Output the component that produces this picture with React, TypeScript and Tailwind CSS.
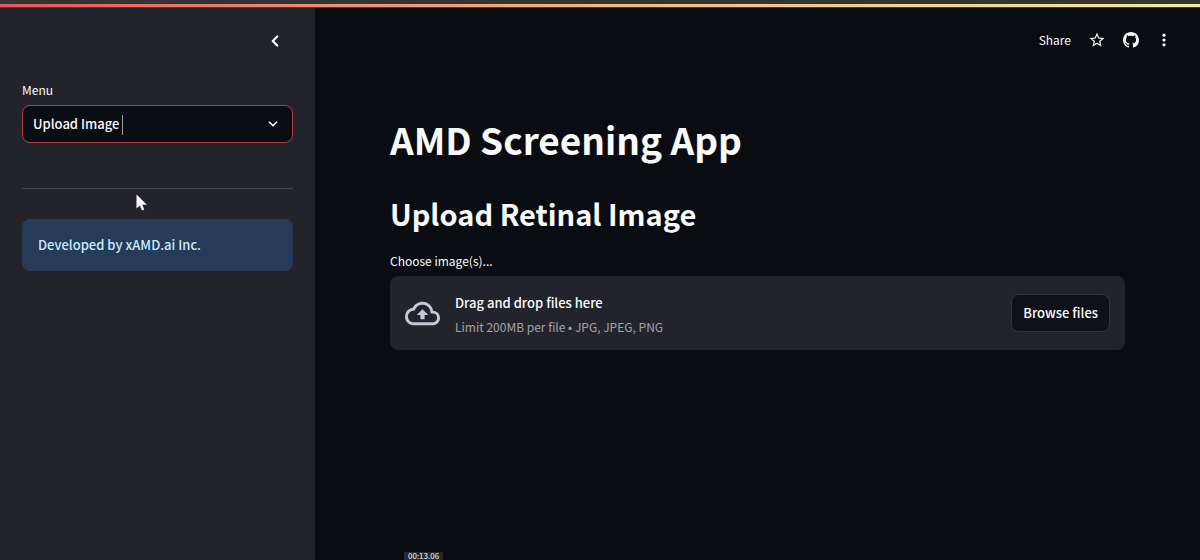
import { useState } from 'react';

import { ChevronDown, ChevronLeft } from 'lucide-react';
import { MdOutlineStarBorder } from 'react-icons/md';

const GithubIcon = () => (
  <svg width="16" height="16" viewBox="0 0 16 16" fill="currentColor" aria-hidden="true">
    <path d="M8 0C3.58 0 0 3.58 0 8c0 3.54 2.29 6.53 5.47 7.59.4.07.55-.17.55-.38 0-.19-.01-.82-.01-1.49-2.01.37-2.53-.49-2.69-.94-.09-.23-.48-.94-.82-1.13-.28-.15-.68-.52-.01-.53.63-.01 1.08.58 1.23.82.72 1.21 1.87.87 2.33.66.07-.52.28-.87.51-1.07-1.78-.2-3.64-.89-3.64-3.95 0-.87.31-1.59.82-2.15-.08-.2-.36-1.02.08-2.12 0 0 .67-.21 2.2.82.64-.18 1.32-.27 2-.27s1.36.09 2 .27c1.53-1.04 2.2-.82 2.2-.82.44 1.1.16 1.92.08 2.12.51.56.82 1.27.82 2.15 0 3.07-1.87 3.75-3.65 3.95.29.25.54.73.54 1.48 0 1.07-.01 1.93-.01 2.2 0 .21.15.46.55.38A8.01 8.01 0 0 0 16 8c0-4.42-3.58-8-8-8z" />
  </svg>
);

const MoreIcon = () => (
  <svg width="16" height="16" viewBox="0 0 16 16" fill="currentColor" aria-hidden="true">
    <circle cx="8" cy="3.2" r="1.6" />
    <circle cx="8" cy="8" r="1.6" />
    <circle cx="8" cy="12.8" r="1.6" />
  </svg>
);

const CloudUploadIcon = () => (
  <svg width="35" height="35" viewBox="0 0 24 24" fill="currentColor" aria-hidden="true">
    <path d="M19.35 10.04A7.49 7.49 0 0 0 12 4C9.11 4 6.6 5.64 5.35 8.04A5.994 5.994 0 0 0 0 14c0 3.31 2.69 6 6 6h13c2.76 0 5-2.24 5-5 0-2.64-2.05-4.78-4.65-4.96zM19 18H6c-2.21 0-4-1.79-4-4 0-2.05 1.53-3.76 3.56-3.97l1.07-.11.5-.95A5.469 5.469 0 0 1 12 6c2.62 0 4.88 1.86 5.39 4.43l.3 1.5 1.53.11A2.98 2.98 0 0 1 22 15c0 1.65-1.35 3-3 3zM8 13h2.55v3h2.9v-3H16l-4-4z" />
  </svg>
);

const Sidebar = () => {
  const [page, setPage] = useState('Upload Image');

  return (
    <aside className="w-[315px] shrink-0 bg-[#23242b] px-[22px]">
      <div className="flex justify-end pt-6">
        <button type="button" aria-label="Close sidebar" className="mr-[9px] p-0">
          <ChevronLeft size={18} strokeWidth={3} />
        </button>
      </div>

      <label htmlFor="menu" className="mt-[30px] block text-xs leading-5">
        Menu
      </label>
      <div className="relative mt-[5px]">
        <select
          id="menu"
          value={page}
          onChange={(e) => setPage(e.target.value)}
          className="h-[38px] w-full appearance-none rounded-lg border border-[#b13a43] bg-[#0a0d12] px-[10px] text-[13px] font-medium outline-none"
        >
          <option>Upload Image</option>
          <option>About</option>
        </select>
        {/* text caret */}
        <span className="pointer-events-none absolute top-[10px] left-[100px] h-5 w-px bg-[#9a9ba1]" />
        <ChevronDown
          size={14}
          strokeWidth={3}
          className="pointer-events-none absolute top-3 right-[13px]"
        />
      </div>

      <hr className="mt-[45px] border-[#43444c]" />

      <div className="mt-[30px] rounded-lg bg-[#263b57] px-4 py-[14px] text-[13px] leading-6 font-medium text-[#c7ebff]">
        Developed by xAMD.ai Inc.
      </div>
    </aside>
  );
};

const Toolbar = () => (
  <div className="flex items-center justify-end gap-[17px] pt-[22px] pr-7">
    <button type="button" className="text-xs leading-5">
      Share
    </button>
    <button type="button" aria-label="Favorite">
      <MdOutlineStarBorder size={18} />
    </button>
    <button type="button" aria-label="View source on GitHub">
      <GithubIcon />
    </button>
    <button type="button" aria-label="More options">
      <MoreIcon />
    </button>
  </div>
);

const Uploader = () => (
  <section className="mt-5">
    <p id="upload-label" className="text-xs leading-5">
      Choose image(s)...
    </p>
    <div
      aria-labelledby="upload-label"
      role="group"
      className="mt-[5px] flex items-center rounded-lg bg-[#23242b] px-[15px] py-[13px]"
    >
      <span className="text-[#c5c8da]">
        <CloudUploadIcon />
      </span>
      <div className="ml-[15px] flex-1">
        <p className="text-[13px] leading-7 font-medium">Drag and drop files here</p>
        <p className="text-xs leading-5 text-[#a2a3a9]">
          Limit 200MB per file • JPG, JPEG, PNG
        </p>
      </div>
      <button
        type="button"
        className="h-[38px] rounded-lg border border-[#34353e] bg-[#0e1118] px-[11px] text-[13px] font-medium"
      >
        Browse files
      </button>
    </div>
  </section>
);

const App = () => (
  <div className="relative flex h-screen flex-col overflow-hidden bg-[#090c11] font-['Noto_Sans_CJK_JP','Noto_Sans',sans-serif] text-[#fafafa]">
    <div className="h-1 shrink-0 bg-[#333333]" />
    <div className="h-1 shrink-0 border-b border-[#4a3a35] bg-linear-to-r from-[#e5555c] via-[#f5b878] to-[#f3ec90]" />

    <div className="flex flex-1">
      <Sidebar />
      <main className="min-w-0 flex-1">
        <Toolbar />
        <div className="px-[75px] pt-[65px]">
          <h1 className="text-[37px] leading-[48px] font-bold">AMD Screening App</h1>
          <h2 className="mt-8 text-[29px] leading-9 font-bold">
            Upload Retinal Image
          </h2>
          <Uploader />
        </div>
      </main>
    </div>

    {/* recording time */}
    <span className="absolute bottom-0 left-[404px] bg-[#26282c] px-1 text-[8px] leading-2">
      00:13.06
    </span>

    {/* mouse pointer */}
    <svg
      className="pointer-events-none absolute top-[194px] left-[136px]"
      width="12"
      height="18"
      viewBox="0 0 12 18"
      fill="#ffffff"
      aria-hidden="true"
    >
      <path d="M0.5 0.5v14l3.3-3 2.2 5 2.3-1-2.1-4.8h4.6z" />
    </svg>
  </div>
);

export default App;
